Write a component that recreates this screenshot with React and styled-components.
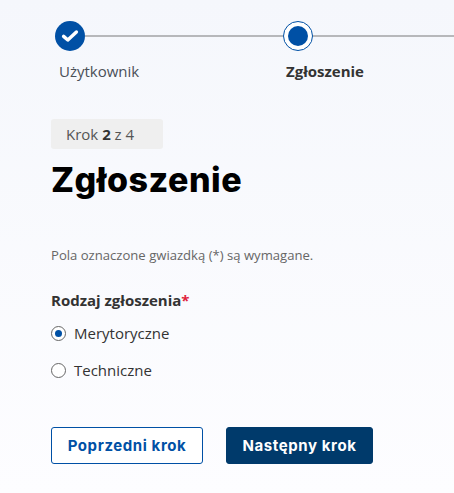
import React from "react";
import styled, { createGlobalStyle } from "styled-components";

const GlobalStyle = createGlobalStyle`
  html, body {
    margin: 0;
    padding: 0;
    height: 100%;
  }
  body {
    overflow: hidden;
    font-family: "Open Sans", "Liberation Sans", sans-serif;
    color: #333;
  }
`;

const Page = styled.div`
  width: 454px;
  height: 493px;
  overflow: hidden;
  box-sizing: border-box;
  padding-top: 21px;
  background: linear-gradient(180deg, #f5f7fc 0%, #fdfdff 100%);
`;

const Stepper = styled.ol`
  display: flex;
  list-style: none;
  margin: 0 0 38px;
  padding: 0 0 0 55px;
`;

const Step = styled.li`
  flex: 0 0 228px;
  display: flex;
  flex-direction: column;
`;

const Track = styled.div`
  display: flex;
  align-items: center;
  height: 30px;
`;

const Line = styled.span`
  flex: 1;
  height: 2px;
  background: #b7b8bb;
`;

const DoneDot = styled.span`
  flex: none;
  width: 30px;
  height: 30px;
  border-radius: 50%;
  background: #0050a5;
  display: flex;
  align-items: center;
  justify-content: center;
`;

const CurrentDot = styled.span`
  flex: none;
  box-sizing: border-box;
  width: 30px;
  height: 30px;
  border-radius: 50%;
  border: 1px solid #0050a5;
  background: #fff;
  display: flex;
  align-items: center;
  justify-content: center;

  &::after {
    content: "";
    width: 20px;
    height: 20px;
    border-radius: 50%;
    background: #0050a5;
  }
`;

const StepLabel = styled.span`
  margin: 10px 0 0 ${(p) => (p.$active ? "3px" : "4px")};
  font-size: 15px;
  line-height: 20px;
  white-space: nowrap;
  font-weight: ${(p) => (p.$active ? 700 : 400)};
  color: ${(p) => (p.$active ? "#333" : "#4a4f57")};
`;

const Content = styled.main`
  padding-left: 51px;
`;

const StepBadge = styled.div`
  box-sizing: border-box;
  width: 112px;
  height: 30px;
  padding-left: 15px;
  border-radius: 3px;
  background: #efefef;
  font-size: 15px;
  line-height: 30px;
  color: #555;

  b {
    color: #333;
  }
`;

const Title = styled.h1`
  margin: 9px 0 0;
  font-family: Inter, "Liberation Sans", sans-serif;
  font-size: 34px;
  line-height: 44px;
  letter-spacing: 0.5px;
  font-weight: 800;
  color: #000;
`;

const Hint = styled.p`
  margin: 44px 0 0;
  font-size: 13.1px;
  line-height: 18px;
  color: #666;
`;

const Fieldset = styled.fieldset`
  border: 0;
  margin: 26px 0 0;
  padding: 0;
`;

const Legend = styled.legend`
  padding: 0;
  font-size: 15px;
  line-height: 20px;
  font-weight: 700;
  color: #333;

  span {
    color: #e0233c;
  }
`;

const Option = styled.label`
  display: flex;
  align-items: center;
  gap: 8px;
  height: 20px;
  margin-top: ${(p) => (p.$first ? "13px" : "17px")};
  font-size: 15px;
  color: #333;
`;

const Radio = styled.span`
  flex: none;
  box-sizing: border-box;
  width: 15px;
  height: 15px;
  border-radius: 50%;
  border: 1px solid #666;
  background: #fff;
  display: flex;
  align-items: center;
  justify-content: center;

  &::after {
    content: "";
    display: ${(p) => (p.$checked ? "block" : "none")};
    width: 7px;
    height: 7px;
    border-radius: 50%;
    background: #0050a5;
  }
`;

const Actions = styled.div`
  display: flex;
  gap: 23px;
  margin-top: 47px;
`;

const Button = styled.button`
  box-sizing: border-box;
  height: 37px;
  width: ${(p) => (p.$primary ? "147px" : "152px")};
  padding: 0;
  border-radius: 3px;
  border: 1px solid ${(p) => (p.$primary ? "#003a6b" : "#0050a5")};
  background: ${(p) => (p.$primary ? "#003a6b" : "#fff")};
  color: ${(p) => (p.$primary ? "#fff" : "#0050a5")};
  font-family: Inter, "Liberation Sans", sans-serif;
  font-size: 15px;
  letter-spacing: 0.6px;
  font-weight: 700;
`;

export default function App() {
  return (
    <>
      <GlobalStyle />
      <Page>
        <Stepper>
          <Step>
            <Track>
              <DoneDot>
                <svg width="18" height="14" viewBox="0 0 18 14" fill="none">
                  <path d="M2.6 7.4 L6.8 11 L15.4 3" stroke="#fff" strokeWidth="3.4" strokeLinecap="round" strokeLinejoin="round" />
                </svg>
              </DoneDot>
              <Line />
            </Track>
            <StepLabel>Użytkownik</StepLabel>
          </Step>
          <Step>
            <Track>
              <CurrentDot />
              <Line />
            </Track>
            <StepLabel $active>Zgłoszenie</StepLabel>
          </Step>
        </Stepper>
        <Content>
          <StepBadge>
            Krok <b>2</b> z 4
          </StepBadge>
          <Title>Zgłoszenie</Title>
          <Hint>Pola oznaczone gwiazdką (*) są wymagane.</Hint>
          <Fieldset>
            <Legend>
              Rodzaj zgłoszenia<span>*</span>
            </Legend>
            <Option $first>
              <Radio $checked />
              Merytoryczne
            </Option>
            <Option>
              <Radio />
              Techniczne
            </Option>
          </Fieldset>
          <Actions>
            <Button>Poprzedni krok</Button>
            <Button $primary>Następny krok</Button>
          </Actions>
        </Content>
      </Page>
    </>
  );
}
